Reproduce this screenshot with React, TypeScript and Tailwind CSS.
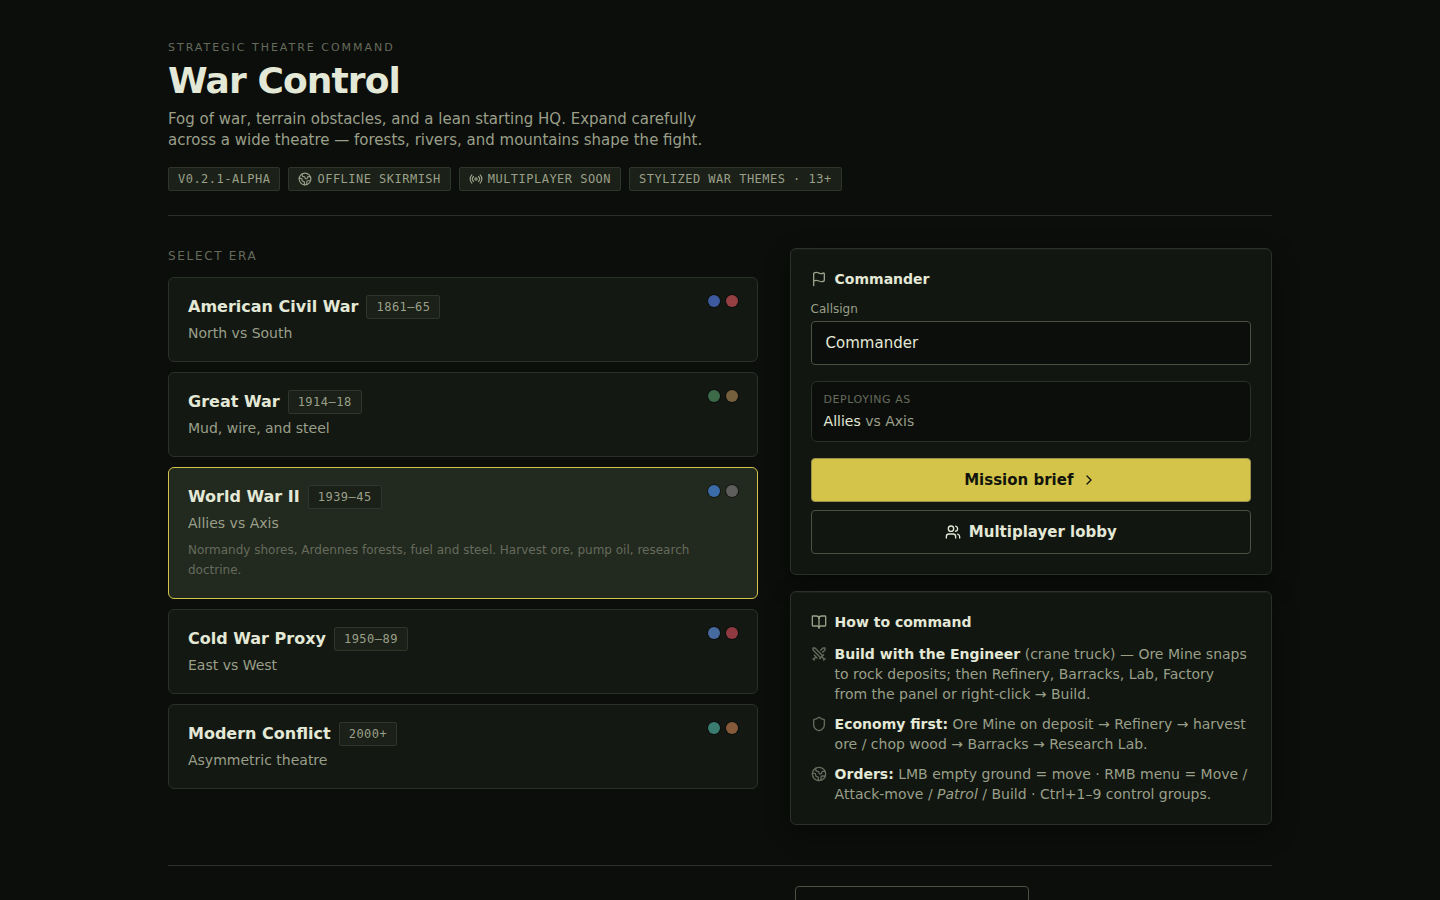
import { useState } from 'react';
import type { ReactNode } from 'react';
import { BookOpen, ChevronRight, Earth, Flag, Radio, Shield, Swords, Users } from 'lucide-react';

type Era = {
  id: string;
  name: string;
  years: string;
  tagline: string;
  colors: [string, string];
  detail?: string;
};

const ERAS: Era[] = [
  { id: 'acw', name: 'American Civil War', years: '1861–65', tagline: 'North vs South', colors: ['bg-[#3d5a9e]', 'bg-[#944043]'] },
  { id: 'ww1', name: 'Great War', years: '1914–18', tagline: 'Mud, wire, and steel', colors: ['bg-[#3d6b4a]', 'bg-[#75603d]'] },
  {
    id: 'ww2',
    name: 'World War II',
    years: '1939–45',
    tagline: 'Allies vs Axis',
    colors: ['bg-[#3b6ca8]', 'bg-[#5e5e5c]'],
    detail: 'Normandy shores, Ardennes forests, fuel and steel. Harvest ore, pump oil, research doctrine.',
  },
  { id: 'cold', name: 'Cold War Proxy', years: '1950–89', tagline: 'East vs West', colors: ['bg-[#466a9e]', 'bg-[#8e3a40]'] },
  { id: 'modern', name: 'Modern Conflict', years: '2000+', tagline: 'Asymmetric theatre', colors: ['bg-[#3a7d70]', 'bg-[#855a3a]'] },
];

function Chip({ children }: { children: ReactNode }) {
  return (
    <span className="inline-flex h-6 items-center gap-[5px] rounded-[2px] border border-[#2e352a] bg-[#1b2118] px-[9px] font-['DejaVu_Sans_Mono',monospace] text-xs tracking-[0.04em] whitespace-nowrap text-[#9a9f89]">
      {children}
    </span>
  );
}

function EraCard({ era, selected, onSelect }: { era: Era; selected: boolean; onSelect: () => void }) {
  return (
    <button
      type="button"
      aria-pressed={selected}
      onClick={onSelect}
      className={
        selected
          ? 'flex items-start justify-between rounded-[6px] border border-[#d4c44a] bg-[#22291f] px-[19px] pt-[17px] pb-[18px] text-left'
          : 'flex items-start justify-between rounded-[6px] border border-[#2a3129] bg-[#131813] px-[19px] pt-[17px] pb-[18px] text-left'
      }
    >
      <span className="block">
        <span className="flex items-center gap-2">
          <span className="text-base leading-6 font-semibold text-[#e4e8d6]">{era.name}</span>
          <Chip>{era.years}</Chip>
        </span>
        <span className="mt-[5px] block text-sm leading-[19px] text-[#9a9f89]">{era.tagline}</span>
        {selected && era.detail && (
          <span className="mt-[7px] block max-w-[528px] text-xs leading-5 text-[#666b5c]">{era.detail}</span>
        )}
      </span>
      <span className="flex shrink-0 gap-1.5">
        {era.colors.map((color) => (
          <span key={color} className={`size-3 rounded-full ring-1 ring-black/40 ${color}`} />
        ))}
      </span>
    </button>
  );
}

function Panel({ icon, title, children }: { icon: ReactNode; title: string; children: ReactNode }) {
  return (
    <section className="rounded-[6px] border border-[#2a3129] bg-[#111610] p-5 shadow-[inset_0_1px_0_rgba(255,255,255,0.04),0_8px_24px_rgba(0,0,0,0.35)]">
      <h2 className="flex items-center gap-2 text-sm leading-5 font-semibold text-[#e4e8d6]">
        {icon}
        {title}
      </h2>
      {children}
    </section>
  );
}

function Tip({ icon, children }: { icon: ReactNode; children: ReactNode }) {
  return (
    <li className="flex gap-2">
      <span className="mt-0.5 shrink-0 text-[#666b5c]">{icon}</span>
      <span>{children}</span>
    </li>
  );
}

export default function App() {
  const [selectedId, setSelectedId] = useState('ww2');
  const [callsign, setCallsign] = useState('Commander');

  return (
    <div className="min-h-screen bg-[#0b0e0b] font-['DejaVu_Sans',sans-serif] text-[#e4e8d6]">
      <div className="mx-auto max-w-[1152px] px-6 pt-10 pb-10">
        <header className="border-b border-[#2a3129] pb-6">
          <p className="text-[11px] leading-4 tracking-[0.18em] text-[#666b5c] uppercase">Strategic Theatre Command</p>
          <h1 className="mt-[5px] text-4xl leading-10 font-bold tracking-tight">War Control</h1>
          <p className="mt-2 max-w-[560px] text-[15px] leading-[21px] text-[#9a9f89]">
            Fog of war, terrain obstacles, and a lean starting HQ. Expand carefully across a wide theatre — forests,
            rivers, and mountains shape the fight.
          </p>
          <div className="mt-4 flex flex-wrap gap-2">
            <Chip>V0.2.1-ALPHA</Chip>
            <Chip>
              <Earth size={14} />
              OFFLINE SKIRMISH
            </Chip>
            <Chip>
              <Radio size={14} />
              MULTIPLAYER SOON
            </Chip>
            <Chip>STYLIZED WAR THEMES · 13+</Chip>
          </div>
        </header>

        <main className="mt-8 grid items-start gap-8 lg:grid-cols-[11fr_9fr]">
          <section>
            <h2 className="text-xs leading-4 tracking-[0.14em] text-[#666b5c] uppercase">Select era</h2>
            <div className="mt-[13px] grid gap-2.5">
              {ERAS.map((era) => (
                <EraCard key={era.id} era={era} selected={era.id === selectedId} onSelect={() => setSelectedId(era.id)} />
              ))}
            </div>
          </section>

          <div className="grid gap-4">
            <Panel icon={<Flag size={16} className="text-[#9a9f89]" />} title="Commander">
              <label htmlFor="callsign" className="mt-3 block text-xs leading-4 text-[#9a9f89]">
                Callsign
              </label>
              <input
                id="callsign"
                value={callsign}
                onChange={(event) => setCallsign(event.target.value)}
                className="mt-1 block h-11 w-full rounded-[4px] border border-[#4a5142] bg-[#0b0e0b] px-3.5 text-[15px] text-[#e4e8d6] outline-none"
              />
              <div className="mt-4 rounded-[6px] border border-[#2a3129] bg-[#0b0e0b] px-3 py-2.5">
                <p className="text-[11px] leading-4 tracking-[0.05em] text-[#666b5c] uppercase">Deploying as</p>
                <p className="mt-[3px] text-sm leading-5 text-[#9a9f89]">
                  <span className="text-[#e4e8d6]">Allies</span> vs Axis
                </p>
              </div>
              <div className="mt-4 grid gap-2">
                <button
                  type="button"
                  className="flex h-11 items-center justify-center gap-2 rounded-[4px] border border-[#98914a] bg-[#d4c44a] text-[15px] font-semibold text-[#12140c]"
                >
                  Mission brief
                  <ChevronRight size={16} />
                </button>
                <button
                  type="button"
                  className="flex h-11 items-center justify-center gap-2 rounded-[4px] border border-[#4a5142] text-[15px] font-semibold"
                >
                  <Users size={16} />
                  Multiplayer lobby
                </button>
              </div>
            </Panel>

            <Panel icon={<BookOpen size={16} className="text-[#9a9f89]" />} title="How to command">
              <ul className="mt-3 grid gap-2.5 text-sm leading-5 text-[#9a9f89]">
                <Tip icon={<Swords size={16} />}>
                  <strong className="font-semibold text-[#e4e8d6]">Build with the Engineer</strong> (crane truck) — Ore
                  Mine snaps to rock deposits; then Refinery, Barracks, Lab, Factory from the panel or right-click →
                  Build.
                </Tip>
                <Tip icon={<Shield size={16} />}>
                  <strong className="font-semibold text-[#e4e8d6]">Economy first:</strong> Ore Mine on deposit →
                  Refinery → harvest ore / chop wood → Barracks → Research Lab.
                </Tip>
                <Tip icon={<Earth size={16} />}>
                  <strong className="font-semibold text-[#e4e8d6]">Orders:</strong> LMB empty ground = move · RMB menu =
                  Move / Attack-move / <em>Patrol</em> / Build · Ctrl+1–9 control groups.
                </Tip>
              </ul>
            </Panel>
          </div>
        </main>

        <footer className="mt-10 flex justify-end border-t border-[#2a3129] pt-5 pr-[243px]">
          <button
            type="button"
            aria-label="Multiplayer lobby"
            className="h-11 w-[234px] rounded-[4px] border border-[#4a5142]"
          />
        </footer>
      </div>
    </div>
  );
}
